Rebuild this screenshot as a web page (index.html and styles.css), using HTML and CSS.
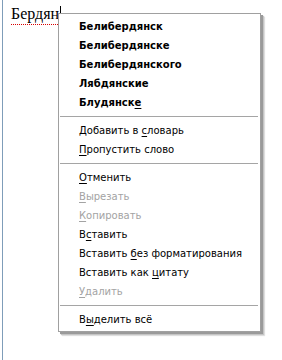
FILE: index.html
```html
<!DOCTYPE html>
<html lang="ru">
<head>
<meta charset="utf-8">
<title>Контекстное меню</title>
<link rel="stylesheet" href="styles.css">
</head>
<body>
<div class="editor">
  <span class="word">Бердян</span><span class="caret"></span>
</div>
<ul class="menu">
  <li class="item bold">Белибердянск</li>
  <li class="item bold">Белибердянске</li>
  <li class="item bold">Белибердянского</li>
  <li class="item bold">Лябдянские</li>
  <li class="item bold">Блудянск<u>е</u></li>
  <li class="sep"></li>
  <li class="item">Добавить в <u>с</u>ловарь</li>
  <li class="item"><u>П</u>ропустить слово</li>
  <li class="sep"></li>
  <li class="item"><u>О</u>тменить</li>
  <li class="item disabled"><u>В</u>ырезать</li>
  <li class="item disabled"><u>К</u>опировать</li>
  <li class="item">В<u>с</u>тавить</li>
  <li class="item">Вставить <u>б</u>ез форматирования</li>
  <li class="item">Вставить как <u>ц</u>итату</li>
  <li class="item disabled"><u>У</u>далить</li>
  <li class="sep"></li>
  <li class="item">В<u>ы</u>делить всё</li>
</ul>
</body>
</html>
```
FILE: styles.css
```css
html, body {
  margin: 0;
  padding: 0;
  background: #ffffff;
}
body {
  width: 282px;
  height: 360px;
  position: relative;
  overflow: hidden;
}
.editor {
  margin-left: 2px;
  height: 360px;
  border-left: 1px solid #7f9db9;
  padding: 4px 0 0 8px;
  box-sizing: border-box;
  font-family: "Liberation Serif", serif;
  font-size: 16px;
  line-height: 19px;
  color: #000;
}
.word {
  display: inline-block;
  line-height: 19px;
  background-image: repeating-linear-gradient(to right, #d80000 0 1px, transparent 1px 2px);
  background-size: 100% 1px;
  background-repeat: no-repeat;
  background-position: 0 20px;
  padding-bottom: 2px;
}
.caret {
  display: inline-block;
  width: 1px;
  height: 16px;
  background: #000;
  vertical-align: top;
  margin-top: 2px;
  margin-left: 1px;
}
.menu {
  position: absolute;
  left: 58px;
  top: 13px;
  width: 203px;
  margin: 0;
  padding: 3px 0 2px 0;
  list-style: none;
  background: #ffffff;
  border: 1px solid #a0a0a0;
  box-sizing: border-box;
  box-shadow: 2px 2px 0 #9a9a9a, 3px 3px 1px #c4c4c4, 4px 4px 1px #e4e4e4;
  font-family: "DejaVu Sans", sans-serif;
  font-size: 10px;
  color: #000;
}
.item {
  height: 19px;
  line-height: 19px;
  padding-left: 20px;
  white-space: nowrap;
}
.item u {
  text-decoration: underline;
  text-underline-offset: 2px;
}
.bold {
  font-weight: bold;
}
.disabled {
  color: #a3a3a3;
}
.sep {
  height: 9px;
  position: relative;
}
.sep::before {
  content: "";
  position: absolute;
  left: 1px;
  right: 2px;
  top: 4px;
  height: 1px;
  background: #a5a5a5;
}
```
